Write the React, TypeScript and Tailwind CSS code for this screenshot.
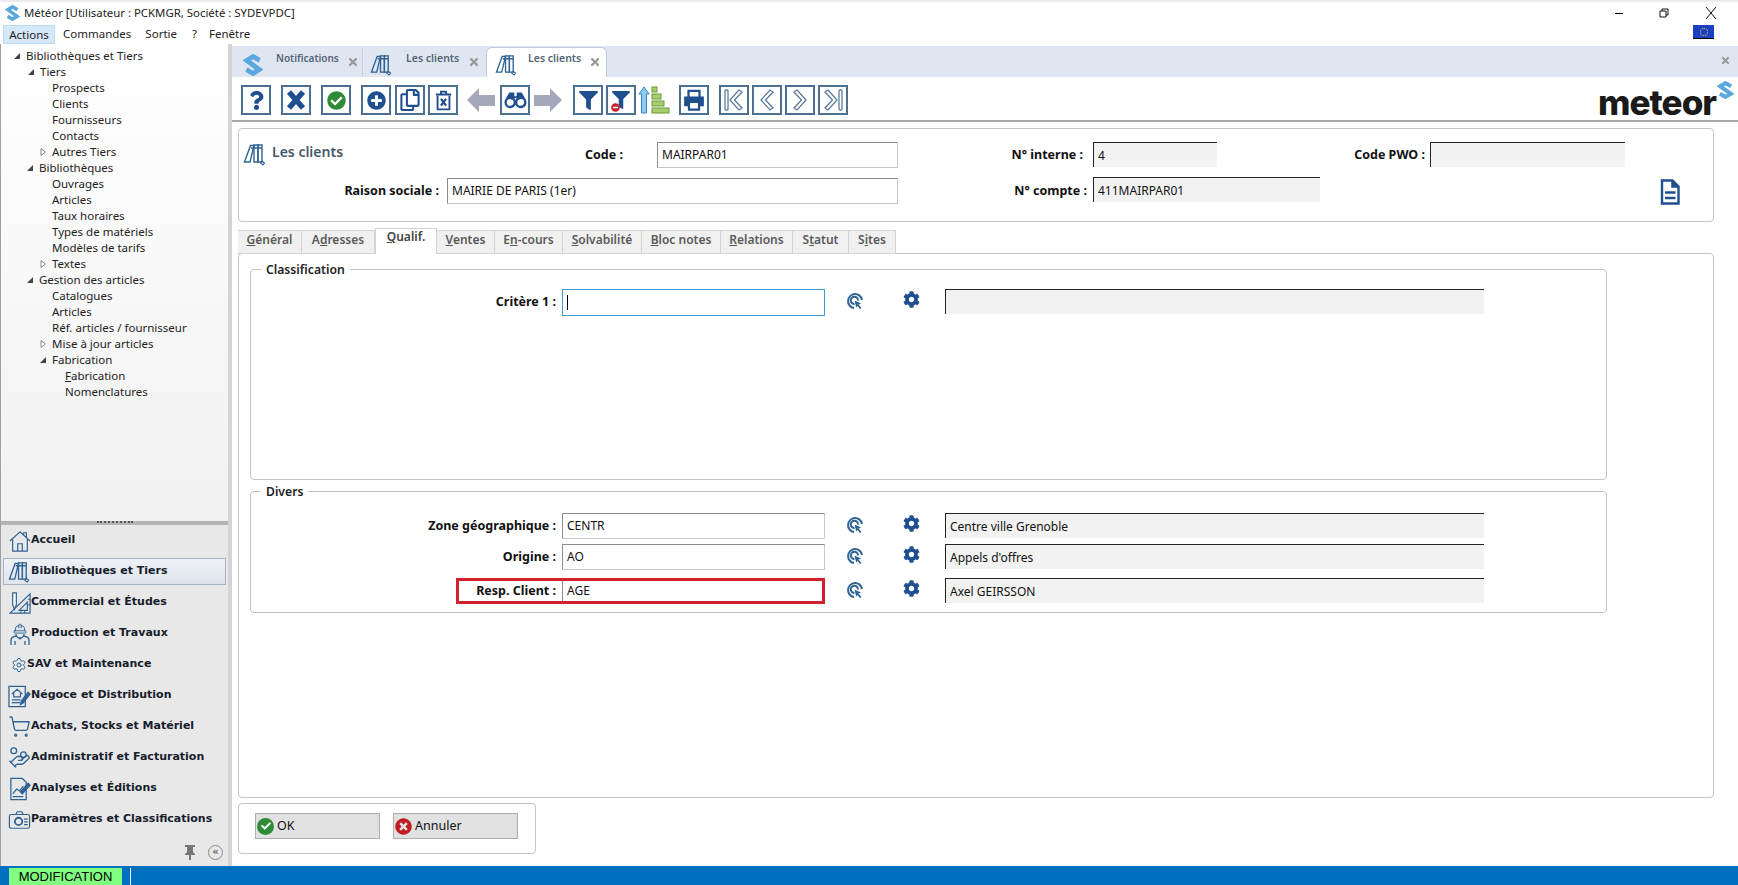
import { ReactNode } from 'react';
import {
  FaCheck,
  FaCheckCircle,
  FaCog,
  FaFilter,
  FaMinusCircle,
  FaPlusCircle,
  FaQuestion,
  FaRegCopy,
  FaTimes,
  FaTimesCircle,
} from 'react-icons/fa';
import { HandCoins, HardHat, Settings, ShoppingCart } from 'lucide-react';

const blue = '#1f4f8f';
const line = '#2f6394';

// Small blue hexagon "S" used in the title bar, the first tab and the logo
function LogoS({ className }: { className: string }) {
  return (
    <svg viewBox="0 0 24 24" className={className} preserveAspectRatio="none">
      <path d="M20 7 L12 2.8 L4.5 7 L19.5 17 L12 21.2 L4 17" fill="none" stroke="#5aa8de" strokeWidth="5.4" />
    </svg>
  );
}

function Books({ className }: { className: string }) {
  return (
    <svg viewBox="0 0 24 24" className={className} fill="none" stroke={line} strokeWidth="1.4">
      <path d="M1.5 20 L7.5 3.5 H11 L7 20 Z" />
      <path d="M11 3 H15 V20 H11 Z" />
      <path d="M15 3 H19 V20 H15 Z" />
      <path d="M11 6 H19 M8 6 H10.5" />
      <path d="M19 19 L21.5 21 L20 23 L17.5 21 Z" strokeWidth="1.1" />
    </svg>
  );
}

function TargetPick() {
  return (
    <svg viewBox="0 0 18 18" className="w-[18px] h-[18px]" fill="none" stroke={line} strokeWidth="2">
      <path d="M8 16 A7 7 0 1 1 16 8" />
      <path d="M8.5 12 A3.6 3.6 0 1 1 12 8.5" />
      <path d="M8.5 8.5 L15 11.5 L12.5 12.8 L15.5 16 L14 17 L11.5 14 L10.2 15.5 Z" fill={line} stroke="none" />
    </svg>
  );
}

function ArrowShape({ dir }: { dir: 'left' | 'right' }) {
  return (
    <svg viewBox="0 0 30 30" className="w-[30px] h-[30px]">
      <path d={dir === 'left' ? 'M1 15 L13 3 V10 H29 V21 H13 V27 Z' : 'M29 15 L17 3 V10 H1 V21 H17 V27 Z'} fill="#a5a7bb" />
    </svg>
  );
}

function NavBtnIcon({ kind }: { kind: 'first' | 'prev' | 'next' | 'last' }) {
  const chev = { fill: '#fff', stroke: '#5d7d9c', strokeWidth: 1.3 };
  return (
    <svg viewBox="0 0 26 26" className="w-[26px] h-[26px]">
      {kind === 'first' && (
        <>
          <rect x="4" y="3" width="3" height="20" rx="1" {...chev} />
          <path d="M18 3 L9 13 L18 23 L21 21 L13.5 13 L21 5 Z" {...chev} />
        </>
      )}
      {kind === 'prev' && <path d="M16 3 L7 13 L16 23 L19 21 L11.5 13 L19 5 Z" {...chev} />}
      {kind === 'next' && <path d="M10 3 L19 13 L10 23 L7 21 L14.5 13 L7 5 Z" {...chev} />}
      {kind === 'last' && (
        <>
          <rect x="19" y="3" width="3" height="20" rx="1" {...chev} />
          <path d="M8 3 L17 13 L8 23 L5 21 L12.5 13 L5 5 Z" {...chev} />
        </>
      )}
    </svg>
  );
}

function ToolBtn({ className, children }: { className?: string; children: ReactNode }) {
  return (
    <div className={`w-[30px] h-[30px] shrink-0 border-2 border-[#4d6f90] flex items-center justify-center ${className ?? ''}`}>
      {children}
    </div>
  );
}

function Toolbar() {
  return (
    <div className="h-[45px] shrink-0 border-b-2 border-[#a8a8a8] flex items-start pt-[8px] pl-[9px] relative">
      <ToolBtn><FaQuestion size={19} color={blue} /></ToolBtn>
      <ToolBtn className="ml-[10px]">
        <svg viewBox="0 0 20 20" className="w-[20px] h-[20px]">
          <path d="M3 2 L10 10 L17 2 M3 18 L10 10 L17 18" fill="none" stroke={blue} strokeWidth="5.5" />
        </svg>
      </ToolBtn>
      <ToolBtn className="ml-[10px]"><FaCheckCircle size={19} color="#2e8b36" /></ToolBtn>
      <ToolBtn className="ml-[10px]"><FaPlusCircle size={19} color={blue} /></ToolBtn>
      <ToolBtn className="ml-[4px]"><FaRegCopy size={22} color={blue} /></ToolBtn>
      <ToolBtn className="ml-[3px]">
        <svg viewBox="0 0 20 24" className="w-[17px] h-[21px]" fill="none" stroke={blue} strokeWidth="2.2">
          <path d="M1 5 H19 M7 4 V1.5 H13 V4" />
          <path d="M3 6 V22.5 H17 V6" />
          <path d="M7 10 L13 18 M13 10 L7 18" strokeWidth="2.6" />
        </svg>
      </ToolBtn>
      <div className="ml-[8px]"><ArrowShape dir="left" /></div>
      <ToolBtn className="ml-[4px]">
        <svg viewBox="0 0 24 18" className="w-[23px] h-[18px]" fill="none" stroke={blue} strokeWidth="2.4">
          <circle cx="6.5" cy="11.5" r="4.8" fill="#fff" />
          <circle cx="17.5" cy="11.5" r="4.8" fill="#fff" />
          <path d="M3 7 L6 2 H10 V9 M21 7 L18 2 H14 V9 M10 6 H14" fill={blue} strokeWidth="1.6" />
        </svg>
      </ToolBtn>
      <div className="ml-[3px]"><ArrowShape dir="right" /></div>
      <ToolBtn className="ml-[10px]"><FaFilter size={19} color={blue} /></ToolBtn>
      <ToolBtn className="ml-[3px] relative">
        <FaFilter size={18} color={blue} />
        <FaMinusCircle size={9} color="#c8202a" className="absolute left-[3px] bottom-[1px]" />
      </ToolBtn>
      <svg viewBox="0 0 32 30" className="ml-[2px] w-[32px] h-[30px]">
        <path d="M6 2 L11 9 H8.5 V28 H3.5 V9 H1 Z" fill="#8fcdf0" stroke="#2f86c8" strokeWidth="1" />
        <g fill="#a6ce6c" stroke="#6a9a3a" strokeWidth="1">
          <rect x="14" y="2" width="5" height="5" />
          <rect x="14" y="9" width="9" height="5" />
          <rect x="14" y="16" width="12" height="5" />
          <rect x="14" y="23" width="17" height="5" />
        </g>
      </svg>
      <ToolBtn className="ml-[9px]">
        <svg viewBox="0 0 24 24" className="w-[22px] h-[22px]" fill="none" stroke={blue} strokeWidth="2.4">
          <path d="M6 9 V2 H18 V9" />
          <path d="M6 18 H2 V9 H22 V18 H18" fill={blue} strokeWidth="1.5" />
          <path d="M6.5 14 H17.5 V22.5 H6.5 Z" fill="#fff" />
        </svg>
      </ToolBtn>
      <ToolBtn className="ml-[10px]"><NavBtnIcon kind="first" /></ToolBtn>
      <ToolBtn className="ml-[3px]"><NavBtnIcon kind="prev" /></ToolBtn>
      <ToolBtn className="ml-[3px]"><NavBtnIcon kind="next" /></ToolBtn>
      <ToolBtn className="ml-[3px]"><NavBtnIcon kind="last" /></ToolBtn>
      <div className="ml-auto mr-[4px] flex items-start -mt-[3px]">
        <span className="font-['Inter'] font-extrabold text-[35px] leading-[40px] tracking-[-1px] text-[#1a1a1a]">meteor</span>
        <LogoS className="w-[17px] h-[18px] ml-[1px] mt-[-1px]" />
      </div>
    </div>
  );
}

function TabStrip() {
  return (
    <div className="h-[33px] shrink-0 bg-[#dfe5f1] flex items-end relative border-t-2 border-white text-[10.5px] font-semibold text-[#556576]">
      <div className="w-[131px] h-[29px] flex items-start pl-[11px] border-r border-[#c8cedb]">
        <LogoS className="w-[20px] h-[22px] mt-[6px]" />
        <span className="ml-[13px] mt-[3px] text-[10px]">Notifications</span>
        <FaTimes size={12} color="#9a9a9a" className="ml-[8px] mt-[8px]" />
      </div>
      <div className="w-[123px] h-[29px] flex items-start pl-[7px]">
        <Books className="w-[23px] h-[23px] mt-[5px]" />
        <span className="ml-[13px] mt-[3px]">Les clients</span>
        <FaTimes size={12} color="#9a9a9a" className="ml-[9px] mt-[8px]" />
      </div>
      <div className="w-[121px] h-[30px] bg-white rounded-t-md border-l border-t border-r border-[#c4cad6] flex items-start pl-[8px]">
        <Books className="w-[23px] h-[23px] mt-[5px]" />
        <span className="ml-[10px] mt-[3px]">Les clients</span>
        <FaTimes size={12} color="#9a9a9a" className="ml-[8px] mt-[8px]" />
      </div>
      <FaTimes size={11} color="#9a9a9a" className="absolute right-[7px] top-[9px]" />
    </div>
  );
}

function Label({ className, children }: { className: string; children: ReactNode }) {
  return <div className={`shrink-0 text-right font-bold text-[12.5px] leading-[25px] text-[#111] ${className}`}>{children}</div>;
}

function Input({ className, value }: { className: string; value?: string }) {
  return (
    <div className={`shrink-0 h-[26px] bg-white border border-t-[#8c8c8c] border-l-[#8c8c8c] border-r-[#c8c8c8] border-b-[#c8c8c8] pl-[4px] text-[12px] leading-[24px] text-[#111] ${className}`}>
      {value}
    </div>
  );
}

function ReadOnly({ className, value }: { className: string; value?: string }) {
  return (
    <div className={`shrink-0 h-[25px] bg-[#f2f2f2] border-t border-l border-[#222] pl-[4px] text-[12px] leading-[25px] text-[#111] ${className}`}>
      {value}
    </div>
  );
}

function HeaderBox() {
  return (
    <div className="ml-[6px] mt-[6px] w-[1476px] h-[94px] shrink-0 border border-[#c4c4c4] rounded-sm pt-[13px]">
      <div className="flex items-start h-[26px]">
        <div className="w-[290px] flex items-start pl-[4px]">
          <Books className="w-[24px] h-[24px]" />
          <span className="ml-[5px] text-[14px] leading-[20px] font-semibold text-[#46586a]">Les clients</span>
        </div>
        <Label className="w-[94px]">Code :</Label>
        <Input className="ml-[34px] w-[241px]" value="MAIRPAR01" />
        <Label className="w-[185px]">N° interne :</Label>
        <ReadOnly className="ml-[10px] w-[124px]" value="4" />
        <Label className="w-[208px]">Code PWO :</Label>
        <ReadOnly className="ml-[5px] w-[195px]" />
      </div>
      <div className="flex items-start mt-[10px]">
        <Label className="w-[200px]">Raison sociale :</Label>
        <Input className="ml-[8px] w-[451px]" value="MAIRIE DE PARIS (1er)" />
        <Label className="w-[189px]">N° compte :</Label>
        <ReadOnly className="ml-[6px] w-[227px] -mt-[1px]" value="411MAIRPAR01" />
        <svg viewBox="0 0 20 26" className="ml-[340px] mt-[1px] w-[20px] h-[26px]" fill="none" stroke={blue} strokeWidth="2.4">
          <path d="M2 1.5 H12.5 L18.5 7.5 V24.5 H2 Z" />
          <path d="M12 1.5 V8 H18.5" fill={blue} strokeWidth="1.5" />
          <path d="M5 13.5 H15.5 M5 19 H15.5" strokeWidth="2.6" />
        </svg>
      </div>
    </div>
  );
}

const formTabs = [
  { u: 'G', rest: 'énéral', w: 'w-[64px]' },
  { pre: 'A', u: 'd', rest: 'resses', w: 'w-[73px]' },
  { u: 'Q', rest: 'ualif.', w: 'w-[62px]', active: true },
  { u: 'V', rest: 'entes', w: 'w-[58px]' },
  { pre: 'E', u: 'n', rest: '-cours', w: 'w-[68px]' },
  { u: 'S', rest: 'olvabilité', w: 'w-[79px]' },
  { u: 'B', rest: 'loc notes', w: 'w-[79px]' },
  { u: 'R', rest: 'elations', w: 'w-[72px]' },
  { pre: 'S', u: 't', rest: 'atut', w: 'w-[56px]' },
  { pre: 'S', u: 'i', rest: 'tes', w: 'w-[47px]' },
];

function FormTabs() {
  return (
    <div className="ml-[6px] mt-[6px] h-[26px] shrink-0 flex items-end relative z-10">
      {formTabs.map((t) => (
        <div
          key={t.rest}
          className={`${t.w} text-center font-semibold text-[12px] text-[#5a5a5a] border-t border-r border-[#d4d4d4] ${
            t.active ? 'h-[26px] bg-white border-l leading-[15px] text-[#444]' : 'h-[24px] bg-[#f0f0f0] leading-[18px] border-b'
          }`}
        >
          {t.pre}
          <span className="underline">{t.u}</span>
          {t.rest}
        </div>
      ))}
    </div>
  );
}

function Group({ title, className, children }: { title: string; className: string; children: ReactNode }) {
  return (
    <div className={`relative ml-[11px] w-[1357px] border border-[#c4c4c4] rounded-sm shrink-0 ${className}`}>
      <span className="absolute left-[10px] top-[-9px] bg-white px-[5px] font-semibold text-[12.2px] leading-[18px] text-[#222]">{title}</span>
      {children}
    </div>
  );
}

function FieldRow({
  label,
  value,
  desc,
  className,
  focused,
  flagged,
}: {
  label: string;
  value?: string;
  desc?: string;
  className?: string;
  focused?: boolean;
  flagged?: boolean;
}) {
  return (
    <div className={`relative flex items-start h-[26px] ${className ?? ''}`}>
      <Label className="w-[305px]">{label}</Label>
      {focused ? (
        <div className="ml-[6px] w-[263px] h-[27px] shrink-0 bg-white border border-[#3f9fd0] flex items-center pl-[4px]">
          <span className="w-px h-[15px] bg-black" />
        </div>
      ) : (
        <Input className="ml-[6px] w-[263px]" value={value} />
      )}
      <div className="ml-[21px] mt-[3px] w-[19px]"><TargetPick /></div>
      <FaCog size={17} color={blue} className="ml-[38px] mt-[2px]" />
      <ReadOnly className="ml-[25px] w-[539px]" value={desc} />
      {flagged && <div className="absolute left-[205px] top-0 w-[369px] h-[26px] border-[3px] border-[#d4202c]" />}
    </div>
  );
}

const tree: { t: ReactNode; pl: string; arrow?: 'open' | 'closed' }[] = [
  { t: 'Bibliothèques et Tiers', pl: 'pl-[12px]', arrow: 'open' },
  { t: 'Tiers', pl: 'pl-[26px]', arrow: 'open' },
  { t: 'Prospects', pl: 'pl-[51px]' },
  { t: 'Clients', pl: 'pl-[51px]' },
  { t: 'Fournisseurs', pl: 'pl-[51px]' },
  { t: 'Contacts', pl: 'pl-[51px]' },
  { t: 'Autres Tiers', pl: 'pl-[38px]', arrow: 'closed' },
  { t: 'Bibliothèques', pl: 'pl-[25px]', arrow: 'open' },
  { t: 'Ouvrages', pl: 'pl-[51px]' },
  { t: 'Articles', pl: 'pl-[51px]' },
  { t: 'Taux horaires', pl: 'pl-[51px]' },
  { t: 'Types de matériels', pl: 'pl-[51px]' },
  { t: 'Modèles de tarifs', pl: 'pl-[51px]' },
  { t: 'Textes', pl: 'pl-[38px]', arrow: 'closed' },
  { t: 'Gestion des articles', pl: 'pl-[25px]', arrow: 'open' },
  { t: 'Catalogues', pl: 'pl-[51px]' },
  { t: 'Articles', pl: 'pl-[51px]' },
  { t: 'Réf. articles / fournisseur', pl: 'pl-[51px]' },
  { t: 'Mise à jour articles', pl: 'pl-[38px]', arrow: 'closed' },
  { t: 'Fabrication', pl: 'pl-[38px]', arrow: 'open' },
  { t: <><span className="underline">F</span>abrication</>, pl: 'pl-[64px]' },
  { t: 'Nomenclatures', pl: 'pl-[64px]' },
];

function Tree() {
  return (
    <div className="flex-1 pt-[4px] bg-gradient-to-b from-white to-[#f1f1f1] text-[11.5px] leading-[16px] text-[#222]">
      {tree.map((n, i) => (
        <div key={i} className={`h-[16px] flex items-center ${n.pl}`}>
          {n.arrow && (
            <svg viewBox="0 0 8 8" className="w-[8px] h-[8px] mr-[5px]">
              {n.arrow === 'open' ? (
                <path d="M1 7 H7 V1 Z" fill="#444" />
              ) : (
                <path d="M2 0.5 L6.5 4 L2 7.5 Z" fill="#fff" stroke="#888" />
              )}
            </svg>
          )}
          <span>{n.t}</span>
        </div>
      ))}
    </div>
  );
}

function NavIcon({ name }: { name: string }) {
  const p = { fill: 'none', stroke: line, strokeWidth: 1.3 };
  if (name === 'home')
    return (
      <svg viewBox="0 0 24 24" className="w-[22px] h-[24px]" {...p}>
        <path d="M1 12 L12 2 L23 12 M4 10 V23 H20 V10 M9.5 23 V15 H14.5 V23 M16 5 V3 H19 V8" />
      </svg>
    );
  if (name === 'books') return <Books className="w-[23px] h-[23px]" />;
  if (name === 'ruler')
    return (
      <svg viewBox="0 0 24 24" className="w-[22px] h-[24px]" {...p}>
        <path d="M1 23 L23 2 V23 Z M11 20 L20 11 V20 Z" />
        <path d="M4 1 H8 V14 L6 19 L4 14 Z" fill="#fff" />
        <path d="M17 23 V20 M13 23 V21 M21 14 H23 M21 8 H23" />
      </svg>
    );
  if (name === 'worker')
    return (
      <span className="relative w-[22px] h-[24px] flex flex-col items-center">
        <HardHat size={14} color={line} strokeWidth={1.6} />
        <svg viewBox="0 0 22 11" className="w-[22px] h-[11px] -mt-[2px]" {...p}>
          <path d="M7 0 A4 4 0 0 0 15 0 M2 11 V6 Q2 3 7 2 L11 5 L15 2 Q20 3 20 6 V11 M6 11 V7 M16 11 V7" />
        </svg>
      </span>
    );
  if (name === 'sav') return <Settings size={16} color={line} strokeWidth={1.5} />;
  if (name === 'negoce')
    return (
      <svg viewBox="0 0 24 24" className="w-[23px] h-[24px]" {...p}>
        <path d="M1 2 H18 V23 H1 Z M4 10 L9.5 5 L15 10 M6 9 V13 H13 V9 M4 16 H13 M4 19 H13" />
        <path d="M13 21 L14 17 L21 8 L23 10 L16 19 Z" fill={line} />
      </svg>
    );
  if (name === 'cart') return <ShoppingCart size={23} color={line} strokeWidth={1.4} />;
  if (name === 'hand') return <HandCoins size={23} color={line} strokeWidth={1.4} />;
  if (name === 'analyses')
    return (
      <svg viewBox="0 0 24 24" className="w-[23px] h-[24px]" {...p}>
        <path d="M3 1 H15 L19 5 V23 H3 Z" />
        <path d="M5 17 L9 12 L12 14 L16 9 M5 20 H16" />
        <path d="M13 15 L21 6 L23 8 L15 17 Z" fill={line} />
      </svg>
    );
  return (
    <svg viewBox="0 0 24 24" className="w-[23px] h-[22px]" {...p}>
      <rect x="1" y="6" width="22" height="15" rx="2" />
      <path d="M8 6 L9.5 3 H14.5 L16 6" />
      <circle cx="11" cy="13.5" r="4" strokeWidth="2" />
      <path d="M17 11 H21 M17 14 H21 M17 17 H21" />
    </svg>
  );
}

const navItems = [
  { icon: 'home', label: 'Accueil' },
  { icon: 'books', label: 'Bibliothèques et Tiers', selected: true },
  { icon: 'ruler', label: 'Commercial et Études' },
  { icon: 'worker', label: 'Production et Travaux' },
  { icon: 'sav', label: 'SAV et Maintenance', narrow: true },
  { icon: 'negoce', label: 'Négoce et Distribution' },
  { icon: 'cart', label: 'Achats, Stocks et Matériel' },
  { icon: 'hand', label: 'Administratif et Facturation' },
  { icon: 'analyses', label: 'Analyses et Éditions' },
  { icon: 'params', label: 'Paramètres et Classifications' },
];

function Sidebar() {
  return (
    <div className="w-[232px] shrink-0 flex flex-col border-l border-[#a0a0a0] border-r-4 border-r-[#d4d4d4]">
      <Tree />
      <div className="h-[4px] shrink-0 bg-[#b4b4b4] flex justify-center">
        <div className="w-[36px] h-[2px] border-t-2 border-dotted border-[#555]" />
      </div>
      <div className="h-[341px] shrink-0 bg-[#e8e8e8] flex flex-col text-[11px] font-['DejaVu_Sans'] font-bold text-[#16202c]">
        {navItems.map((n) => (
          <div
            key={n.label}
            className={
              n.selected
                ? 'h-[27px] my-[2px] mx-[2px] border border-[#a9b3bd] bg-gradient-to-b from-[#eef1f6] to-[#dfe4ec] flex items-center pl-[4px] shrink-0'
                : 'h-[31px] mx-[2px] flex items-center pl-[5px] shrink-0'
            }
          >
            <span className={n.narrow ? 'w-[19px] pl-[3px] shrink-0 flex' : 'w-[23px] shrink-0 flex justify-center'}>
              <NavIcon name={n.icon} />
            </span>
            <span className="whitespace-nowrap">{n.label}</span>
          </div>
        ))}
        <div className="mt-auto mb-[6px] mr-[5px] flex items-center justify-end gap-[12px]">
          <svg viewBox="0 0 12 16" className="w-[12px] h-[16px]">
            <path d="M1 1 H11 V3 H9 V8 L11 10 V11 H7 V16 H5 V11 H1 V10 L3 8 V3 H1 Z" fill="#777" />
          </svg>
          <span className="w-[15px] h-[15px] rounded-full border border-[#888] text-[#666] text-[10px] leading-[12px] text-center">«</span>
        </div>
      </div>
    </div>
  );
}

export default function App() {
  return (
    <div className="w-[1738px] h-[885px] flex flex-col overflow-hidden bg-white font-['Noto_Sans',sans-serif] text-[12px] text-[#222]">
      <div className="h-[2px] shrink-0 bg-[#ececec]" />
      {/* title bar */}
      <div className="h-[22px] shrink-0 flex items-center pl-[5px] pr-[21px] relative">
        <LogoS className="w-[15px] h-[16px] mr-[4px]" />
        <span className="text-[11.4px]">Météor [Utilisateur : PCKMGR, Société : SYDEVPDC]</span>
        <div className="ml-auto flex items-center gap-[36px]">
          <span className="w-[8px] h-px bg-black" />
          <svg viewBox="0 0 10 10" className="w-[10px] h-[12px]" fill="none" stroke="#111">
            <path d="M1 3 H7 V9 H1 Z M3 3 V1 H9 V7 H7" />
          </svg>
          <svg viewBox="0 0 12 12" className="w-[12px] h-[14px]" fill="none" stroke="#111">
            <path d="M1 0 L11 12 M11 0 L1 12" />
          </svg>
        </div>
      </div>
      {/* menu */}
      <div className="h-[20px] shrink-0 flex items-center relative text-[11.5px]">
        <div className="ml-[3px] w-[52px] h-[19px] bg-[#d4e8f8] border border-[#bcdcf4] text-center leading-[17px]">Actions</div>
        <span className="ml-[8px]">Commandes</span>
        <span className="ml-[14px]">Sortie</span>
        <span className="ml-[15px]">?</span>
        <span className="ml-[12px]">Fenêtre</span>
        <div className="absolute right-[24px] top-[1px] w-[21px] h-[14px] bg-[#1a3fc0] border-b border-black flex items-center justify-center">
          <span className="w-[8px] h-[8px] rounded-full border border-dotted border-[#e8d840]" />
        </div>
      </div>
      {/* main */}
      <div className="flex-1 flex min-h-0">
        <Sidebar />
        <div className="flex-1 min-w-0 flex flex-col">
          <TabStrip />
          <Toolbar />
          <HeaderBox />
          <FormTabs />
          <div className="ml-[6px] -mt-px w-[1476px] h-[545px] shrink-0 border border-[#c4c4c4] rounded-sm pt-[15px]">
            <Group title="Classification" className="h-[211px] pt-[19px]">
              <FieldRow label="Critère 1 :" focused />
            </Group>
            <Group title="Divers" className="mt-[11px] h-[122px] pt-[21px]">
              <FieldRow label="Zone géographique :" value="CENTR" desc="Centre ville Grenoble" />
              <FieldRow className="mt-[5px]" label="Origine :" value="AO" desc="Appels d'offres" />
              <FieldRow className="mt-[8px]" label="Resp. Client :" value="AGE" desc="Axel GEIRSSON" flagged />
            </Group>
          </div>
          <div className="ml-[6px] mt-[5px] w-[298px] h-[51px] shrink-0 border border-[#c4c4c4] rounded-sm pt-[9px] pl-[16px] flex gap-[13px] items-start">
            <div className="w-[125px] h-[26px] bg-[#e1e1e1] border border-[#adadad] flex items-center pl-[1px] gap-[3px]">
              <span className="w-[17px] h-[17px] rounded-full bg-[#2e8b36] flex items-center justify-center">
                <FaCheck size={10} color="#fff" />
              </span>
              <span className="text-[12.5px] text-[#111]">OK</span>
            </div>
            <div className="w-[125px] h-[26px] bg-[#e1e1e1] border border-[#adadad] flex items-center pl-[1px] gap-[3px]">
              <FaTimesCircle size={17} color="#c01c22" />
              <span className="text-[12.5px] text-[#111]">Annuler</span>
            </div>
          </div>
        </div>
      </div>
      {/* status bar */}
      <div className="h-[19px] shrink-0 bg-[#0070c0] flex items-end pl-[9px]">
        <div className="w-[113px] h-[17px] bg-[#80ff80] text-center font-['Liberation_Sans'] text-[13px] leading-[17px] text-black">MODIFICATION</div>
        <div className="ml-[8px] w-px h-[17px] bg-white" />
      </div>
    </div>
  );
}
